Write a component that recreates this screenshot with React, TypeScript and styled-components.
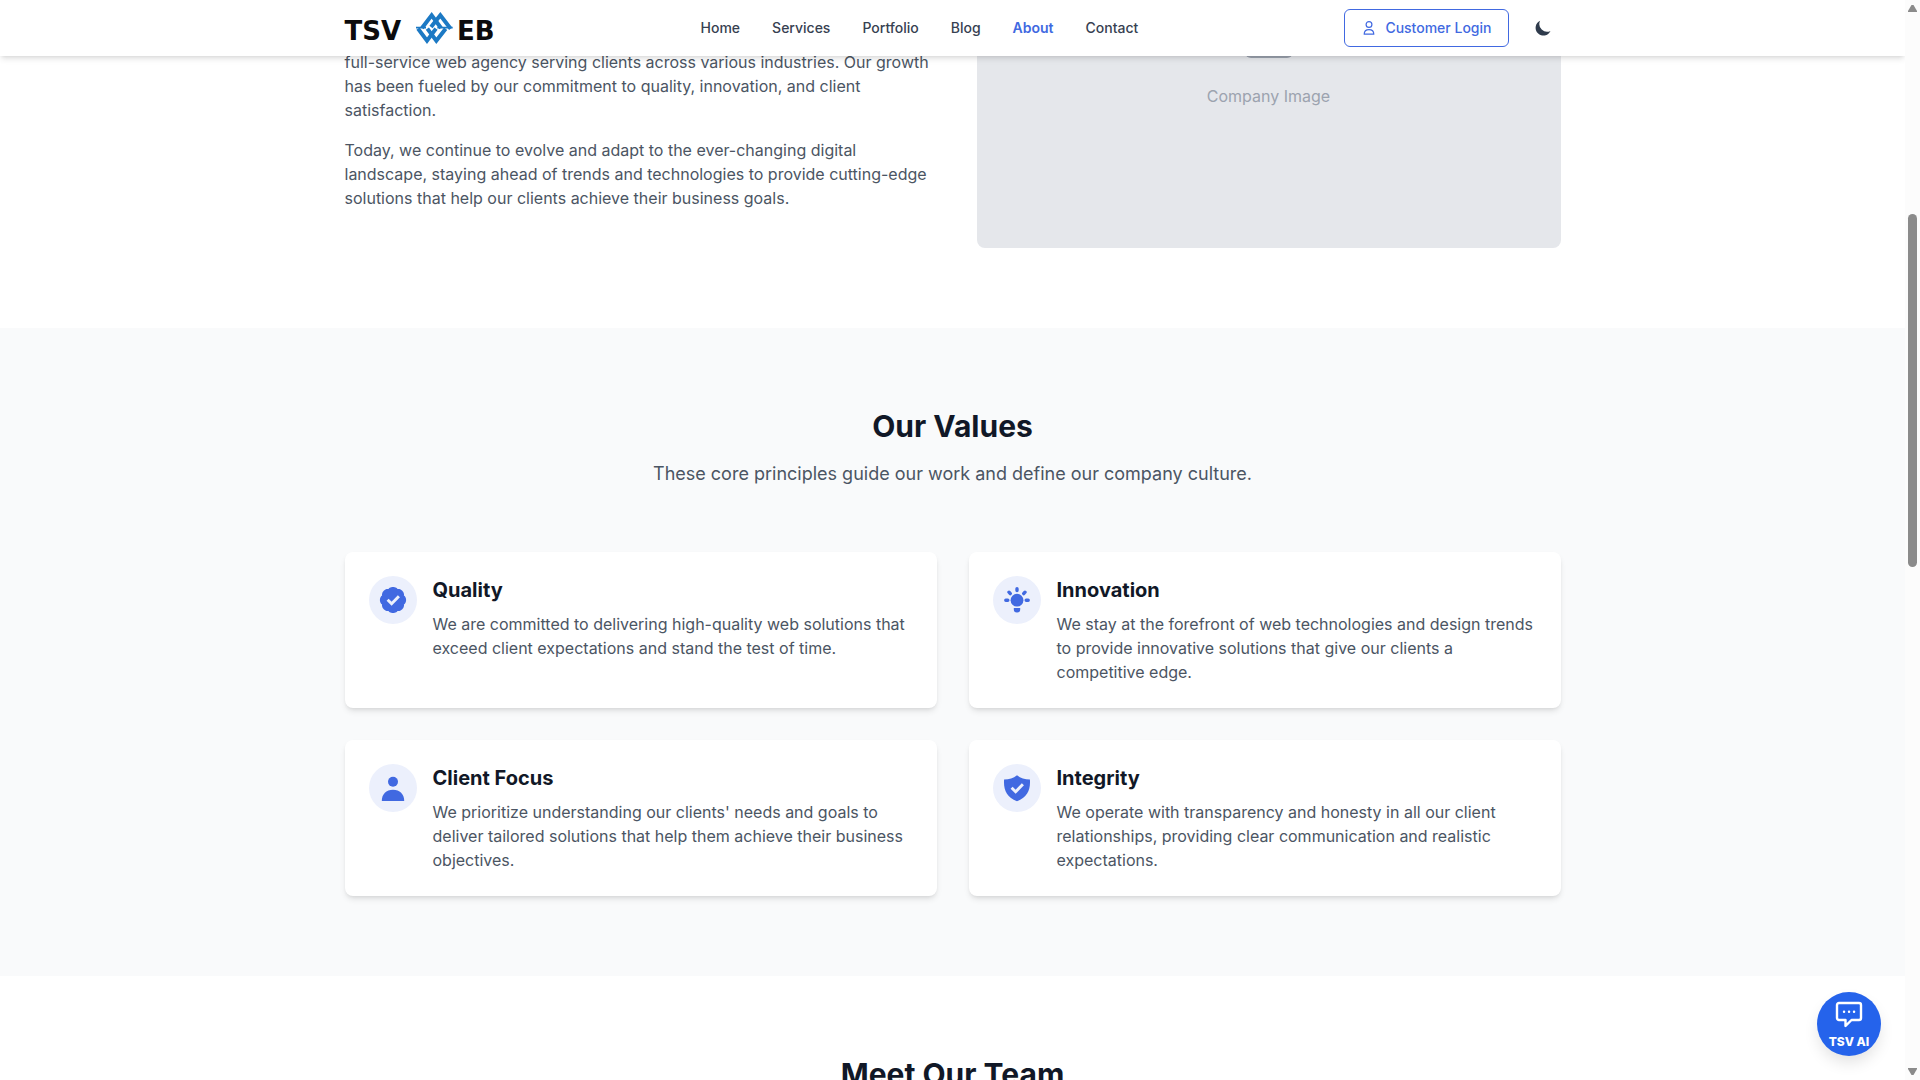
import React from "react";
import styled, { createGlobalStyle } from "styled-components";

const GlobalStyle = createGlobalStyle`
  *, *::before, *::after { box-sizing: border-box; }
  html, body { margin: 0; height: 100%; overflow: hidden; }
  body {
    background: #fff;
    color: #111827;
    font-family: Inter, "Liberation Sans", sans-serif;
    font-size: 16px;
    line-height: 24px;
  }
  h2, h3, p { margin: 0; }
  a { color: inherit; text-decoration: none; }
`;

const brand = "#4169e1";
const shadow =
  "0 4px 6px -1px rgba(0, 0, 0, 0.1), 0 2px 4px -2px rgba(0, 0, 0, 0.1)";

const Shell = styled.div`
  display: grid;
  grid-template-columns: minmax(0, 1fr) 15px;
  height: 100vh;
`;

const Page = styled.div`
  position: relative;
  min-height: 0;
  overflow: hidden;
`;

const Container = styled.div`
  width: 100%;
  max-width: 1280px;
  margin: 0 auto;
  padding: 0 32px;
`;

const Header = styled.header`
  position: absolute;
  inset: 0 0 auto;
  z-index: 2;
  background: #fff;
  box-shadow: ${shadow};
`;

const Bar = styled(Container)`
  display: flex;
  align-items: center;
  justify-content: space-between;
  height: 56px;
`;

const Logo = styled.a`
  display: flex;
  align-items: flex-end;
  gap: 4px;
  width: 150px;
  height: 32px;
  color: #0b0b0d;
  font: bold 26px/26px "DejaVu Sans", sans-serif;

  svg { width: 37px; height: 32px; margin-left: auto; }
`;

const Nav = styled.nav`
  display: flex;
  gap: 32px;
`;

const NavLink = styled.a<{ $active?: boolean }>`
  color: ${(p) => (p.$active ? brand : "#374151")};
  font-size: 14px;
  font-weight: ${(p) => (p.$active ? 600 : 500)};
  line-height: 20px;
`;

const Actions = styled.div`
  display: flex;
  align-items: center;
  gap: 16px;
`;

const LoginButton = styled.button`
  display: flex;
  align-items: center;
  gap: 8px;
  padding: 8px 16px;
  border: 1px solid ${brand};
  border-radius: 6px;
  background: none;
  color: ${brand};
  font: 500 14px/20px Inter, sans-serif;
`;

const ThemeButton = styled.button`
  display: grid;
  place-items: center;
  width: 36px;
  height: 36px;
  padding: 0;
  border: 0;
  background: none;
  color: #2f3b4c;
`;

const StoryGrid = styled(Container)`
  display: grid;
  grid-template-columns: minmax(0, 1fr) calc(50% - 24px);
  gap: 40px;
  margin-bottom: 80px;
`;

const StoryText = styled.div`
  display: flex;
  flex-direction: column;
  gap: 16px;
  padding-top: 50px;
  color: #4b5563;
`;

const Placeholder = styled.div`
  display: flex;
  flex-direction: column;
  align-items: center;
  gap: 26px;
  height: 248px;
  padding-top: 10px;
  border-radius: 0 0 8px 8px;
  background: #e5e7eb;
  color: #9ca3af;
`;

const Values = styled.section`
  padding: 80px 0;
  background: #f9fafb;
`;

const Heading = styled.h2`
  font-size: 30px;
  font-weight: 700;
  line-height: 36px;
  text-align: center;
`;

const Lead = styled.p`
  margin: 16px 0 64px;
  color: #4b5563;
  font-size: 18px;
  line-height: 28px;
  text-align: center;
`;

const CardGrid = styled.div`
  display: grid;
  grid-template-columns: repeat(2, minmax(0, 1fr));
  gap: 32px;
`;

const Card = styled.article`
  display: flex;
  align-items: flex-start;
  gap: 16px;
  padding: 24px;
  border-radius: 8px;
  background: #fff;
  box-shadow: ${shadow};
`;

const IconDisc = styled.div`
  display: grid;
  flex: none;
  place-items: center;
  width: 48px;
  height: 48px;
  border-radius: 50%;
  background: #ecf0fc;
  color: ${brand};

  svg { width: 28px; height: 28px; }
`;

const CardTitle = styled.h3`
  margin-bottom: 8px;
  font-size: 20px;
  font-weight: 700;
  line-height: 28px;
`;

const CardText = styled.p`
  color: #4b5563;
`;

const Team = styled.section`
  padding: 80px 0;
`;

const ChatButton = styled.button`
  position: absolute;
  right: 24px;
  bottom: 24px;
  z-index: 3;
  display: flex;
  flex-direction: column;
  align-items: center;
  gap: 6px;
  width: 64px;
  height: 64px;
  padding: 8px 0 6px;
  border: 0;
  border-radius: 50%;
  background: #2563eb;
  box-shadow: 0 8px 16px -2px rgba(0, 0, 0, 0.12);
  color: #fff;
  font: 800 12px/16px Inter, sans-serif;
  white-space: nowrap;
`;

const Scrollbar = styled.div`
  display: flex;
  flex-direction: column;
  align-items: center;
  padding: 5px 0;
  background: #fcfcfc;
  color: #8b8b8b;
`;

const Track = styled.div`
  display: grid;
  flex: 1;
  grid-template-rows: 202fr 353fr 501fr;
`;

const Thumb = styled.div`
  grid-row: 2;
  width: 9px;
  border-radius: 5px;
  background: currentColor;
`;

const Emblem = () => (
  <svg viewBox="0 0 111 96" fill="none" stroke="#1c79c4" aria-hidden="true">
    <g strokeWidth="12" strokeLinejoin="miter">
      <path d="M18 48 47 10 75 48" />
      <path d="M45 45 73 10 104 50" />
      <path d="M6 50 33 86 60 50" />
      <path d="M34 50 61 86 89 50" />
    </g>
    <path d="M0 47h30M64 47h46" strokeWidth="5" />
  </svg>
);

const UserIcon = () => (
  <svg width="16" height="16" viewBox="0 0 16 16" fill="none" stroke="currentColor" strokeWidth="1.2" aria-hidden="true">
    <circle cx="8" cy="4.5" r="2.9" />
    <path d="M3.2 14.2c0-3 2-4.6 4.8-4.6s4.8 1.6 4.8 4.6z" strokeLinejoin="round" />
  </svg>
);

const MoonIcon = () => (
  <svg width="16" height="16" viewBox="0 0 16 16" fill="currentColor" aria-hidden="true">
    <path d="M5.1.7A7.8 7.8 0 1 0 15.5 11 7.8 7.8 0 0 1 5.1.7Z" />
  </svg>
);

const badge = (() => {
  // Eight-lobed seal, sampled around the centre.
  const points: string[] = [];
  for (let i = 0; i < 96; i++) {
    const a = (i / 96) * Math.PI * 2;
    const r = 11.8 + 1.3 * Math.abs(Math.cos(4 * a)) ** 0.7;
    points.push(`${(14 + r * Math.cos(a)).toFixed(2)},${(14 + r * Math.sin(a)).toFixed(2)}`);
  }
  return points.join(" ");
})();

const tick = <path d="m8.600 13.800 4 4 7.300-7.600" fill="none" stroke="#ecf0fc" strokeWidth="2.900" />;

const QualityIcon = () => (
  <svg viewBox="0 0 28 28" fill="currentColor" aria-hidden="true">
    <polygon points={badge} />
    {tick}
  </svg>
);

const BulbIcon = () => (
  <svg viewBox="0 0 28 28" fill="currentColor" aria-hidden="true">
    <circle cx="14" cy="14.2" r="6.4" />
    <path d="M10.8 22h6.4v1.6a3 3 0 0 1-3 3h-.4a3 3 0 0 1-3-3z" />
    <path
      d="M14 2.800v1.800M6 6.200l1.300 1.400M22 6.200l-1.300 1.400M2.800 14.200h2M23.200 14.200h2"
      fill="none"
      stroke="currentColor"
      strokeWidth="3.400"
      strokeLinecap="round"
    />
  </svg>
);

const PersonIcon = () => (
  <svg viewBox="0 0 28 28" fill="currentColor" aria-hidden="true">
    <circle cx="14" cy="7.8" r="5" />
    <path d="M2.8 27c0-7 4.4-11.3 11.2-11.3S25.200 20 25.200 27z" />
  </svg>
);

const ShieldIcon = () => (
  <svg viewBox="0 0 28 28" fill="currentColor" aria-hidden="true">
    <path d="M14 1.200c3.700 2.900 7.700 4.200 12.900 4.300C27.700 15.500 24.300 23.600 14 27.200 3.700 23.600.3 15.500 1.100 5.500 6.300 5.400 10.300 4.100 14 1.200Z" />
    {tick}
  </svg>
);

const ChatIcon = () => (
  <svg width="28" height="28" viewBox="0 0 28 28" fill="none" stroke="currentColor" strokeWidth="2.400" strokeLinejoin="round" aria-hidden="true">
    <path d="M4 3h20a2 2 0 0 1 2 2v13a2 2 0 0 1-2 2h-7.500l-6 6v-6H4a2 2 0 0 1-2-2V5a2 2 0 0 1 2-2Z" />
    <path d="M9 11.800h.1M14 11.800h.1M19 11.800h.1" strokeLinecap="round" />
  </svg>
);

const PictureIcon = () => (
  <svg width="48" height="48" viewBox="0 0 48 48" aria-hidden="true">
    <rect width="48" height="48" rx="6" fill="#9ca3af" />
  </svg>
);

const Arrow = ({ down }: { down?: boolean }) => (
  <svg width="9" height="7" viewBox="0 0 9 7" fill="currentColor" aria-hidden="true">
    <path d={down ? "M0 0h9v1L5.500 7h-2L0 1z" : "M3.500 0h2L9 6v1H0V6z"} />
  </svg>
);

const links = ["Home", "Services", "Portfolio", "Blog", "About", "Contact"];

const values = [
  {
    title: "Quality",
    icon: <QualityIcon />,
    text: "We are committed to delivering high-quality web solutions that exceed client expectations and stand the test of time.",
  },
  {
    title: "Innovation",
    icon: <BulbIcon />,
    text: "We stay at the forefront of web technologies and design trends to provide innovative solutions that give our clients a competitive edge.",
  },
  {
    title: "Client Focus",
    icon: <PersonIcon />,
    text: "We prioritize understanding our clients' needs and goals to deliver tailored solutions that help them achieve their business objectives.",
  },
  {
    title: "Integrity",
    icon: <ShieldIcon />,
    text: "We operate with transparency and honesty in all our client relationships, providing clear communication and realistic expectations.",
  },
];

export default function App() {
  return (
    <Shell>
      <GlobalStyle />
      <Page>
        <Header>
          <Bar>
            <Logo href="#" aria-label="TSVWEB">
              <span>TSV</span>
              <Emblem />
              <span>EB</span>
            </Logo>
            <Nav>
              {links.map((name) => (
                <NavLink key={name} href={`#${name.toLowerCase()}`} $active={name === "About"}>
                  {name}
                </NavLink>
              ))}
            </Nav>
            <Actions>
              <LoginButton type="button">
                <UserIcon />
                Customer Login
              </LoginButton>
              <ThemeButton type="button" aria-label="Toggle theme">
                <MoonIcon />
              </ThemeButton>
            </Actions>
          </Bar>
        </Header>

        <main>
          <StoryGrid as="section">
            <StoryText>
              <p>
                full-service web agency serving clients across various industries. Our growth has
                been fueled by our commitment to quality, innovation, and client satisfaction.
              </p>
              <p>
                Today, we continue to evolve and adapt to the ever-changing digital landscape,
                staying ahead of trends and technologies to provide cutting-edge solutions that
                help our clients achieve their business goals.
              </p>
            </StoryText>
            <Placeholder>
              <PictureIcon />
              <span>Company Image</span>
            </Placeholder>
          </StoryGrid>

          <Values>
            <Container>
              <Heading>Our Values</Heading>
              <Lead>These core principles guide our work and define our company culture.</Lead>
              <CardGrid>
                {values.map((v) => (
                  <Card key={v.title}>
                    <IconDisc>{v.icon}</IconDisc>
                    <div>
                      <CardTitle>{v.title}</CardTitle>
                      <CardText>{v.text}</CardText>
                    </div>
                  </Card>
                ))}
              </CardGrid>
            </Container>
          </Values>

          <Team>
            <Heading>Meet Our Team</Heading>
          </Team>
        </main>

        <ChatButton type="button">
          <ChatIcon />
          TSV AI
        </ChatButton>
      </Page>

      <Scrollbar aria-hidden="true">
        <Arrow />
        <Track>
          <Thumb />
        </Track>
        <Arrow down />
      </Scrollbar>
    </Shell>
  );
}
